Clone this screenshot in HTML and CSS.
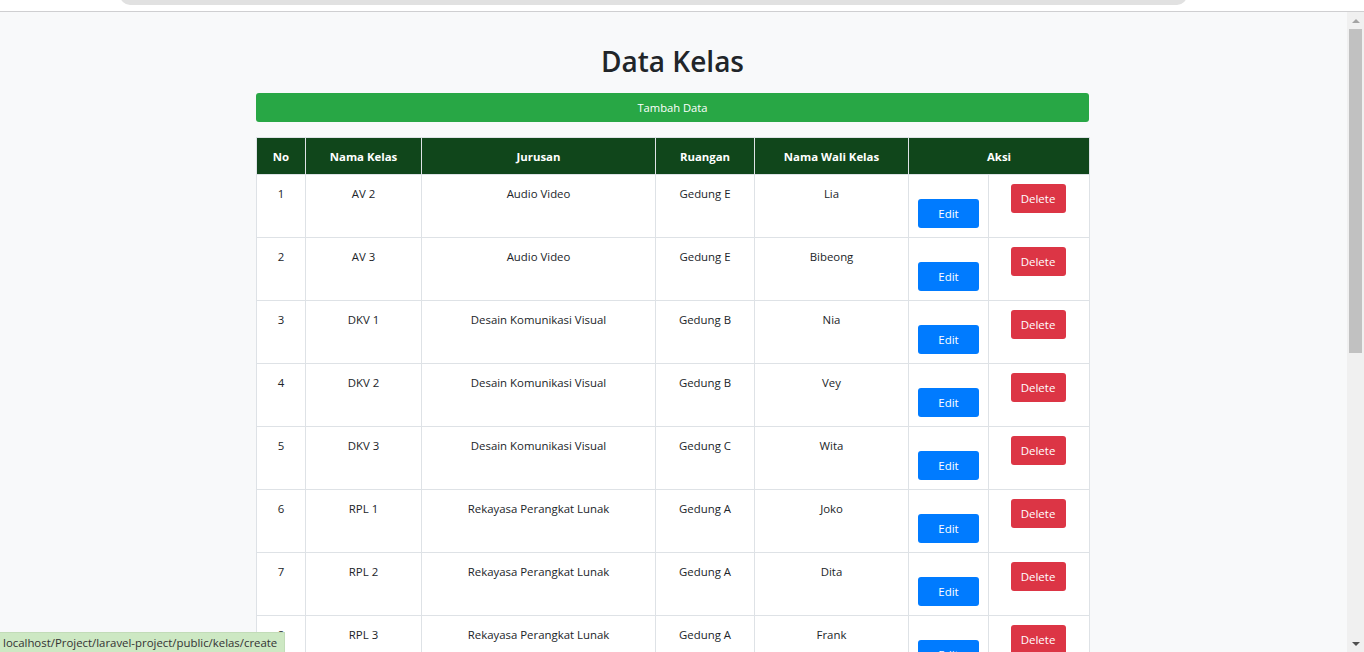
FILE: index.html
```html
<!DOCTYPE html>
<html lang="id">
<head>
<meta charset="utf-8">
<title>Data Kelas</title>
<link rel="stylesheet" href="styles.css">
</head>
<body>
<div class="chrome"><div class="pill"></div></div>
<div class="frame">
  <main class="page">
    <div class="container">
      <h1 class="title">Data Kelas</h1>
      <a class="btn btn-add" href="#">Tambah Data</a>
      <table class="tbl">
        <colgroup>
          <col class="c-no"><col class="c-nama"><col class="c-jur"><col class="c-ru"><col class="c-wali"><col class="c-edit"><col class="c-del">
        </colgroup>
        <thead>
          <tr>
            <th>No</th>
            <th>Nama Kelas</th>
            <th>Jurusan</th>
            <th>Ruangan</th>
            <th>Nama Wali Kelas</th>
            <th colspan="2">Aksi</th>
          </tr>
        </thead>
        <tbody>
          <tr><td>1</td><td>AV 2</td><td>Audio Video</td><td>Gedung E</td><td>Lia</td><td class="td-edit"><a class="btn btn-edit" href="#">Edit</a></td><td class="td-del"><button class="btn btn-del">Delete</button></td></tr>
          <tr><td>2</td><td>AV 3</td><td>Audio Video</td><td>Gedung E</td><td>Bibeong</td><td class="td-edit"><a class="btn btn-edit" href="#">Edit</a></td><td class="td-del"><button class="btn btn-del">Delete</button></td></tr>
          <tr><td>3</td><td>DKV 1</td><td>Desain Komunikasi Visual</td><td>Gedung B</td><td>Nia</td><td class="td-edit"><a class="btn btn-edit" href="#">Edit</a></td><td class="td-del"><button class="btn btn-del">Delete</button></td></tr>
          <tr><td>4</td><td>DKV 2</td><td>Desain Komunikasi Visual</td><td>Gedung B</td><td>Vey</td><td class="td-edit"><a class="btn btn-edit" href="#">Edit</a></td><td class="td-del"><button class="btn btn-del">Delete</button></td></tr>
          <tr><td>5</td><td>DKV 3</td><td>Desain Komunikasi Visual</td><td>Gedung C</td><td>Wita</td><td class="td-edit"><a class="btn btn-edit" href="#">Edit</a></td><td class="td-del"><button class="btn btn-del">Delete</button></td></tr>
          <tr><td>6</td><td>RPL 1</td><td>Rekayasa Perangkat Lunak</td><td>Gedung A</td><td>Joko</td><td class="td-edit"><a class="btn btn-edit" href="#">Edit</a></td><td class="td-del"><button class="btn btn-del">Delete</button></td></tr>
          <tr><td>7</td><td>RPL 2</td><td>Rekayasa Perangkat Lunak</td><td>Gedung A</td><td>Dita</td><td class="td-edit"><a class="btn btn-edit" href="#">Edit</a></td><td class="td-del"><button class="btn btn-del">Delete</button></td></tr>
          <tr><td>8</td><td>RPL 3</td><td>Rekayasa Perangkat Lunak</td><td>Gedung A</td><td>Frank</td><td class="td-edit"><a class="btn btn-edit" href="#">Edit</a></td><td class="td-del"><button class="btn btn-del">Delete</button></td></tr>
        </tbody>
      </table>
    </div>
  </main>
  <div class="scrollbar">
    <div class="arrow up"></div>
    <div class="track"><div class="thumb"></div></div>
    <div class="arrow down"></div>
  </div>
  <div class="status">localhost/Project/laravel-project/public/kelas/create</div>
</div>
</body>
</html>
```
FILE: styles.css
```css
* { box-sizing: border-box; }
html, body { margin: 0; padding: 0; }
body {
  width: 1364px;
  height: 652px;
  overflow: hidden;
  background: #fff;
  font-family: "Open Sans", "Noto Sans", sans-serif;
  color: #212529;
}
.chrome {
  height: 12px;
  background: #fff;
  border-bottom: 1px solid #cfcfd1;
  position: relative;
}
.pill {
  position: absolute;
  left: 120px;
  top: -10px;
  width: 1067px;
  height: 15px;
  background: #e1e1e1;
  border-radius: 0 0 10px 10px;
}
.frame {
  height: 640px;
  display: flex;
  position: relative;
}
.page {
  flex: 1;
  background: #f8f9fa;
  overflow: hidden;
}
.container {
  width: 835px;
  padding: 30px 2px 0 0;
  margin: 0 auto;
}
.title {
  margin: 0 0 13px;
  text-align: center;
  font-size: 28px;
  font-weight: 600;
  line-height: 38px;
  color: #212529;
}
.btn {
  display: inline-block;
  border: 0;
  border-radius: 3px;
  color: #fff;
  font-family: inherit;
  font-size: 11.5px;
  line-height: 29px;
  height: 29px;
  text-align: center;
  text-decoration: none;
  padding: 0;
}
.btn-add {
  display: block;
  width: 100%;
  background: #28a745;
  margin-bottom: 15px;
  font-size: 11.2px;
}
.tbl {
  width: 833px;
  border-collapse: collapse;
  background: #fff;
  font-size: 11.4px;
  table-layout: fixed;
}
.c-no { width: 49px; }
.c-nama { width: 116px; }
.c-jur { width: 234px; }
.c-ru { width: 99px; }
.c-wali { width: 154px; }
.c-edit { width: 80px; }
.c-del { width: 101px; }
.tbl th, .tbl td {
  border: 1px solid #dee2e6;
  text-align: center;
  vertical-align: top;
}
.tbl th {
  background: #10461b;
  border-color: #dee2e6;
  color: #fff;
  font-weight: 700;
  height: 37px;
  vertical-align: middle;
  padding: 0 4px;
}
.tbl td {
  height: 63px;
  padding: 9px 4px 0;
  line-height: 19px;
}
.tbl td.td-edit { padding-top: 24px; }
.tbl td.td-del { padding: 9px 6px 0 4px; }
.btn-edit {
  width: 61px;
  background: #007bff;
  vertical-align: top;
}
.btn-del {
  width: 55px;
  background: #dc3545;
  vertical-align: top;
}
.scrollbar {
  width: 17px;
  background: #f0f0f0;
  display: flex;
  flex-direction: column;
  align-items: center;
}
.arrow {
  height: 17px;
  width: 17px;
  display: flex;
  align-items: center;
  justify-content: center;
}
.arrow::before {
  content: "";
  border-left: 4px solid transparent;
  border-right: 4px solid transparent;
}
.arrow.up::before { border-bottom: 4px solid #a3a3a3; }
.arrow.down::before { border-top: 4px solid #505050; }
.track {
  flex: 1;
  width: 100%;
  display: flex;
  justify-content: center;
}
.thumb {
  width: 13px;
  height: 324px;
  background: #c1c1c1;
}
.status {
  position: absolute;
  left: 0;
  bottom: 0;
  height: 20px;
  padding: 0 7px 0 3px;
  background: #cde8c3;
  border-top: 1px solid #c2dcb8;
  border-right: 1px solid #c2dcb8;
  color: #333;
  font-family: "Open Sans", sans-serif;
  font-size: 11.4px;
  line-height: 19px;
}
```
